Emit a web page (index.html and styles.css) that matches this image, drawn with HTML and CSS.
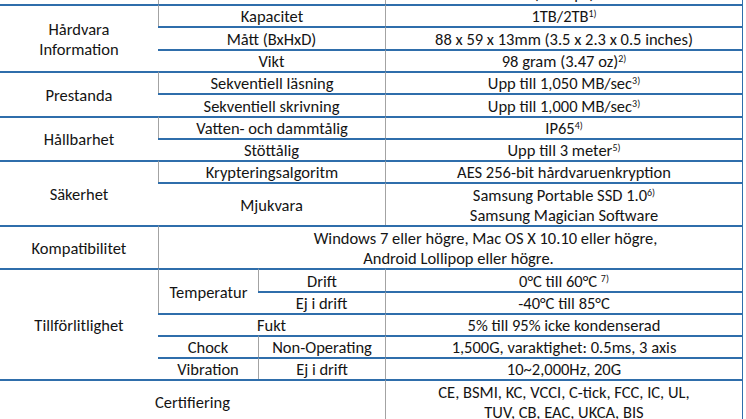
FILE: index.html
```html
<!DOCTYPE html>
<html lang="sv">
<head>
<meta charset="utf-8">
<title>Specifikationer</title>
<link rel="stylesheet" href="styles.css">
</head>
<body>
<table class="spec">
  <colgroup>
    <col class="c1"><col class="c2"><col class="c3"><col class="c4">
  </colgroup>
  <tbody>
    <tr class="h22 first">
      <td></td>
      <td colspan="2"></td>
      <td class="val bottom">(10Gbps)</td>
    </tr>
    <tr class="h22">
      <td rowspan="3" class="grp two">Hårdvara<br>Information</td>
      <td colspan="2">Kapacitet</td>
      <td class="val">1TB/2TB<sup>1)</sup></td>
    </tr>
    <tr class="h23">
      <td colspan="2">Mått (BxHxD)</td>
      <td class="val">88 x 59 x 13mm (3.5 x 2.3 x 0.5 inches)</td>
    </tr>
    <tr class="h22">
      <td colspan="2">Vikt</td>
      <td class="val">98 gram (3.47 oz)<sup>2)</sup></td>
    </tr>
    <tr class="h22">
      <td rowspan="2" class="grp">Prestanda</td>
      <td colspan="2">Sekventiell läsning</td>
      <td class="val">Upp till 1,050 MB/sec<sup>3)</sup></td>
    </tr>
    <tr class="h23">
      <td colspan="2">Sekventiell skrivning</td>
      <td class="val">Upp till 1,000 MB/sec<sup>3)</sup></td>
    </tr>
    <tr class="h22">
      <td rowspan="2" class="grp">Hållbarhet</td>
      <td colspan="2">Vatten- och dammtålig</td>
      <td class="val">IP65<sup>4)</sup></td>
    </tr>
    <tr class="h22">
      <td colspan="2">Stöttålig</td>
      <td class="val">Upp till 3 meter<sup>5)</sup></td>
    </tr>
    <tr class="h22">
      <td rowspan="2" class="grp">Säkerhet</td>
      <td colspan="2">Krypteringsalgoritm</td>
      <td class="val">AES 256-bit hårdvaruenkryption</td>
    </tr>
    <tr class="h43">
      <td colspan="2">Mjukvara</td>
      <td class="val two">Samsung Portable SSD 1.0<sup>6)</sup><br>Samsung Magician Software</td>
    </tr>
    <tr class="h43">
      <td class="grp">Kompatibilitet</td>
      <td colspan="3" class="val two"><span class="line shift">Windows 7 eller högre, Mac OS X 10.10 eller högre,</span><span class="line shift2">Android Lollipop eller högre.</span></td>
    </tr>
    <tr class="h23">
      <td rowspan="5" class="grp">Tillförlitlighet</td>
      <td rowspan="2">Temperatur</td>
      <td>Drift</td>
      <td class="val">0°C till 60°C <sup>7)</sup></td>
    </tr>
    <tr class="h22">
      <td>Ej i drift</td>
      <td class="val">-40°C till 85°C</td>
    </tr>
    <tr class="h22">
      <td colspan="2">Fukt</td>
      <td class="val">5% till 95% icke kondenserad</td>
    </tr>
    <tr class="h22">
      <td>Chock</td>
      <td>Non-Operating</td>
      <td class="val">1,500G, varaktighet: 0.5ms, 3 axis</td>
    </tr>
    <tr class="h22">
      <td>Vibration</td>
      <td>Ej i drift</td>
      <td class="val">10~2,000Hz, 20G</td>
    </tr>
    <tr class="h44">
      <td colspan="3" class="grp">Certifiering</td>
      <td class="val two">CE, BSMI, KC, VCCI, C-tick, FCC, IC, UL,<br>TUV, CB, EAC, UKCA, BIS</td>
    </tr>
  </tbody>
</table>
</body>
</html>
```
FILE: styles.css
```css
html, body {
  margin: 0;
  padding: 0;
  background: #ffffff;
  overflow: hidden;
}

body {
  font-family: "Carlito", "Calibri", "Lato", "Liberation Sans", sans-serif;
  font-size: 16.5px;
  color: #141414;
}

.spec {
  border-collapse: separate;
  border-spacing: 0;
  table-layout: fixed;
  width: 743px;
  margin-top: -18px;
}

.c1 { width: 158px; }
.c2 { width: 100px; }
.c3 { width: 127px; }
.c4 { width: 358px; }

.spec td {
  padding: 0;
  text-align: center;
  vertical-align: middle;
  line-height: 20px;
  white-space: nowrap;
  border-top: 2px solid #2f6eab;
  border-left: 1px solid #a3a3a3;
  box-sizing: border-box;
}

.spec tr > td:first-child {
  border-left: none;
}

.spec td.val {
  border-right: 1px solid #2f6eab;
}

.first td {
  border-top: none;
}

.spec td.bottom {
  vertical-align: bottom;
  line-height: 22px;
}

.h22 { height: 22px; }
.h23 { height: 23px; }
.h43 { height: 43px; }
.h44 { height: 44px; }

.two {
  line-height: 21px;
}

.line {
  display: block;
}

.shift {
  padding-left: 70px;
}

.shift2 {
  padding-left: 16px;
}

sup {
  font-size: 10px;
  line-height: 0;
  vertical-align: 5px;
}
```
